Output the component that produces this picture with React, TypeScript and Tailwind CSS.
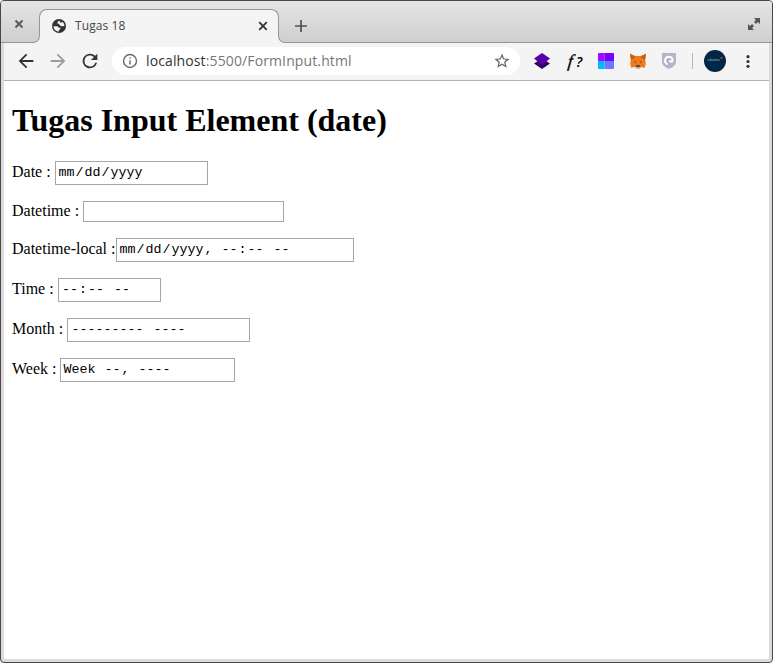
import React from "react";

type Field = { label: string; labelClass: string; boxClass: string; parts: string[] };

const fields: Field[] = [
  { label: "Date :", labelClass: "w-[43px] pb-[3px]", boxClass: "w-[153px] h-6 pl-[2px]", parts: ["mm", "/", "dd", "/", "yyyy"] },
  { label: "Datetime :", labelClass: "w-[71px] pb-px", boxClass: "w-[201px] h-[21px] pl-[2px]", parts: [] },
  { label: "Datetime-local :", labelClass: "w-[104px] pb-[3px]", boxClass: "w-[238px] h-6 pl-[2px]", parts: ["mm", "/", "dd", "/", "yyyy", ", ", "--", ":", "--", " ", "--"] },
  { label: "Time :", labelClass: "w-[46px] pb-[3px]", boxClass: "w-[103px] h-6 pl-[2.5px]", parts: ["--", ":", "--", " ", "--"] },
  { label: "Month :", labelClass: "w-[55px] pb-[3px]", boxClass: "w-[183px] h-6 pl-[3px]", parts: ["---------", " ", "----"] },
  { label: "Week :", labelClass: "w-[48px] pb-[3px]", boxClass: "w-[175px] h-6 pl-[2px]", parts: ["Week ", "--", ", ", "----"] },
];

function DateField({ label, labelClass, boxClass, parts }: Field) {
  return (
    <div className="flex items-center">
      <span className={`${labelClass} shrink-0 whitespace-nowrap text-base leading-[18px]`}>{label}</span>
      <div className={`${boxClass} flex shrink-0 items-center whitespace-pre border border-[#a6a6a6] bg-white pb-px font-['Liberation_Mono',monospace] text-[13.333px] leading-[15px]`}>
        {parts.map((p, i) => (
          <span key={i} className="px-[0.5px]">{p}</span>
        ))}
      </div>
    </div>
  );
}

function Titlebar() {
  return (
    <div className="relative flex h-[42px] items-start border-b border-[#969696] bg-linear-to-b from-[#e5e5e5] to-[#cfcfcf]">
      <svg className="ml-[13px] mt-[18px] size-[10px] shrink-0" viewBox="0 0 10 10">
        <path d="M1.5 1.5l7 7m0-7l-7 7" stroke="#5c5c5c" strokeWidth="2" />
      </svg>
      <div className="relative ml-[15px] mt-2 flex h-[34px] w-60 shrink-0 items-center rounded-t-[8px] border-x border-t border-[#969696] bg-[#f4f4f4] pb-px pl-3 pr-[10px]">
        <div className="absolute -left-[7px] bottom-0 h-[7px] w-[7px] bg-[#f4f4f4]">
          <div className="h-[7px] w-[7px] rounded-br-[7px] border-b border-r border-[#969696] bg-[#d1d1d1]" />
        </div>
        <div className="absolute -right-[7px] bottom-0 h-[7px] w-[7px] bg-[#f4f4f4]">
          <div className="h-[7px] w-[7px] rounded-bl-[7px] border-b border-l border-[#969696] bg-[#d1d1d1]" />
        </div>
        <svg className="size-[14px] shrink-0" viewBox="0 0 14 14">
          <circle cx="7" cy="7" r="7" fill="#303236" />
          <path d="M1.5 7.2h3.4q1.6.1 2 1.6h1.4v1.5l-1.5.7v1.5C3.8 12.5 1.5 10 1.5 7.2zM7.2 1.5L5.5 3v1.7h1.8v1.1q1.1 1.4 2.2 1.5l2.9-.2c0-2-.8-3.6-2.2-4.7v1H8.4z" fill="#f4f4f4" />
        </svg>
        <span className="ml-[9px] flex-1 font-['Open_Sans',sans-serif] text-xs tracking-[0.1px] text-[#45474a]">Tugas 18</span>
        <svg className="size-[10px]" viewBox="0 0 10 10">
          <path d="M1.2 1.2l7.6 7.6m0-7.6L1.2 8.8" stroke="#333" strokeWidth="1.8" />
        </svg>
      </div>
      <svg className="ml-4 mt-[19px] size-3" viewBox="0 0 12 12">
        <path d="M6 0v12M0 6h12" stroke="#505050" strokeWidth="1.7" />
      </svg>
      <svg className="ml-auto mr-[12px] mt-[17px] size-3" viewBox="0 0 12 12" fill="#555">
        <path d="M6 0h6v6L9.9 4.1 8 6 6 4l1.9-1.9zM0 6l2.1 1.9L4 6l2 2-1.9 1.9L6 12H0z" />
      </svg>
    </div>
  );
}

function Toolbar() {
  return (
    <div className="flex h-[38px] shrink-0 items-center border-b border-[#b3b3b3] bg-[#f4f4f4] pb-px">
      <svg className="ml-[11px] size-[22px] shrink-0" viewBox="0 0 24 24" fill="#333">
        <path d="M20 11H7.83l5.59-5.59L12 4l-8 8 8 8 1.41-1.41L7.83 13H20z" />
      </svg>
      <svg className="ml-[10px] size-[22px] shrink-0" viewBox="0 0 24 24" fill="#9c9c9c">
        <path d="M4 11h12.17l-5.59-5.59L12 4l8 8-8 8-1.41-1.41L16.17 13H4z" />
      </svg>
      <svg className="ml-[10px] size-[22px] shrink-0" viewBox="0 0 24 24" fill="#333">
        <path d="M17.65 6.35A8 8 0 1 0 19.73 14h-2.08A6 6 0 1 1 12 6c1.66 0 3.14.69 4.22 1.78L13 11h7V4z" />
      </svg>
      <div className="ml-[11px] flex h-7 w-[408px] shrink-0 items-center rounded-full bg-white px-[10px]">
        <svg className="size-4" viewBox="2 2 20 20" fill="#6a6b6c">
          <path d="M11 7h2v2h-2zm0 4h2v6h-2zm1-9a10 10 0 1 0 0 20 10 10 0 0 0 0-20zm0 18a8 8 0 1 1 0-16 8 8 0 0 1 0 16z" transform="translate(1.2 1.2) scale(.9)" />
        </svg>
        <span className="ml-2 flex-1 font-['Open_Sans',sans-serif] text-sm leading-5 tracking-[0.12px] text-[#777]"><span className="text-[#333]">localhost</span>:5500/FormInput.html</span>
        <svg className="size-4" viewBox="1.5 1.5 21 21" fill="#666">
          <path d="M22 9.24l-7.19-.62L12 2 9.19 8.63 2 9.24l5.46 4.73L5.82 21 12 17.27 18.18 21l-1.63-7.03zM12 15.4l-3.76 2.27 1-4.28-3.32-2.88 4.38-.38L12 6.1l1.71 4.04 4.38.38-3.32 2.88 1 4.28z" />
        </svg>
      </div>
      <svg className="ml-[14px] size-4 shrink-0" viewBox="0 0 16 16">
        <path d="M8 5.300L16 10.600 8 16 0 10.600z" fill="#330066" />
        <path d="M8 0l8 5.600-8 6.400-8-6.400z" fill="#5a00a8" />
      </svg>
      <span className="ml-[14px] flex w-[22px] shrink-0 items-baseline justify-center gap-px font-['Liberation_Serif',serif] text-[18px] leading-5 text-black">
        <i className="-skew-x-6 pr-[2px] [-webkit-text-stroke:0.3px_black]">f</i>
        <span className="font-['Open_Sans',sans-serif] text-[14px] font-semibold italic">?</span>
      </span>
      <svg className="ml-3 size-4 shrink-0" viewBox="0 0 16 16">
        <path d="M1 0h5.5v8H0V1q0-1 1-1z" fill="#a10bff" />
        <path d="M6.5 0H15q1 0 1 1v7H6.5z" fill="#7205ff" />
        <path d="M0 8h6.5v8H1q-1 0-1-1z" fill="#00b9ff" />
        <path d="M6.5 8H16v7q0 1-1 1H6.5z" fill="#6a7aff" />
      </svg>
      <svg className="ml-4 size-4 shrink-0" viewBox="0 0 16 16">
        <path d="M0 .7l5.6 2.300h4.800L16 .7l-.8 6 .6 4-1 4-3.500-.8-1.700 1.500H6.400l-1.700-1.500-3.500.8-1-4 .6-4z" fill="#ee7a1c" />
        <path d="M0 .7l5.600 3.200-2.600 1.800-2 1zM16 .7l-5.600 3.200 2.600 1.800 2 1z" fill="#c95a15" />
        <path d="M3.800 8.300l2.300.6-.2 1.200zM12.200 8.300l-2.300.6.2 1.200z" fill="#3a2a28" />
        <path d="M6.400 12.300h3.200l.4 1.500H6z" fill="#293344" />
        <path d="M4.900 13.900h6.200l-1.500 1.400H6.400z" fill="#c9ad96" />
      </svg>
      <svg className="ml-4 h-4 w-[14px] shrink-0" viewBox="0 0 14 16">
        <path d="M0 0h14v9q0 4.200-7 7-7-2.800-7-7z" fill="#b4b4c7" />
        <path d="M5.800 11.200A3.800 3.800 0 1 1 10.700 7.600q-.3 1.600-2 1.100L7.300 7.400" fill="none" stroke="#fff" strokeWidth="2" />
      </svg>
      <div className="ml-4 h-4 w-px shrink-0 bg-[#b5b5b5]" />
      <div className="ml-[11px] flex size-[22px] shrink-0 items-center justify-center rounded-full bg-[#002846]">
        <svg className="mb-1 h-2 w-4" viewBox="0 0 16 8">
          <text x="0.500" y="6" fontFamily="Open Sans" fontSize="3.800" fontStyle="italic" fill="#b6bdb5">ubuntu</text>
          <circle cx="14.500" cy="3" r="1" fill="#d73d58" />
        </svg>
      </div>
      <svg className="ml-5 h-[13px] w-1 shrink-0" viewBox="0 0 4 13" fill="#333">
        <circle cx="2" cy="1.7" r="1.6" />
        <circle cx="2" cy="6.5" r="1.6" />
        <circle cx="2" cy="11.3" r="1.6" />
      </svg>
    </div>
  );
}

export default function App() {
  return (
    <div className="h-[663px] w-[773px] overflow-hidden bg-white">
      <div className="flex h-full flex-col overflow-hidden rounded-[4px] border border-[#494648] bg-[#dcdada]">
        <Titlebar />
        <div className="mx-[3px] mb-[3px] flex flex-1 flex-col bg-white">
          <Toolbar />
          <main className="pl-2 pt-[21px] font-['Liberation_Serif',serif] text-black">
            <h1 className="text-[32px] font-bold leading-[37px]">Tugas Input Element (date)</h1>
            <div className="mt-[22px] flex flex-col gap-4">
              {fields.map((f) => (
                <DateField key={f.label} {...f} />
              ))}
            </div>
          </main>
        </div>
      </div>
    </div>
  );
}
